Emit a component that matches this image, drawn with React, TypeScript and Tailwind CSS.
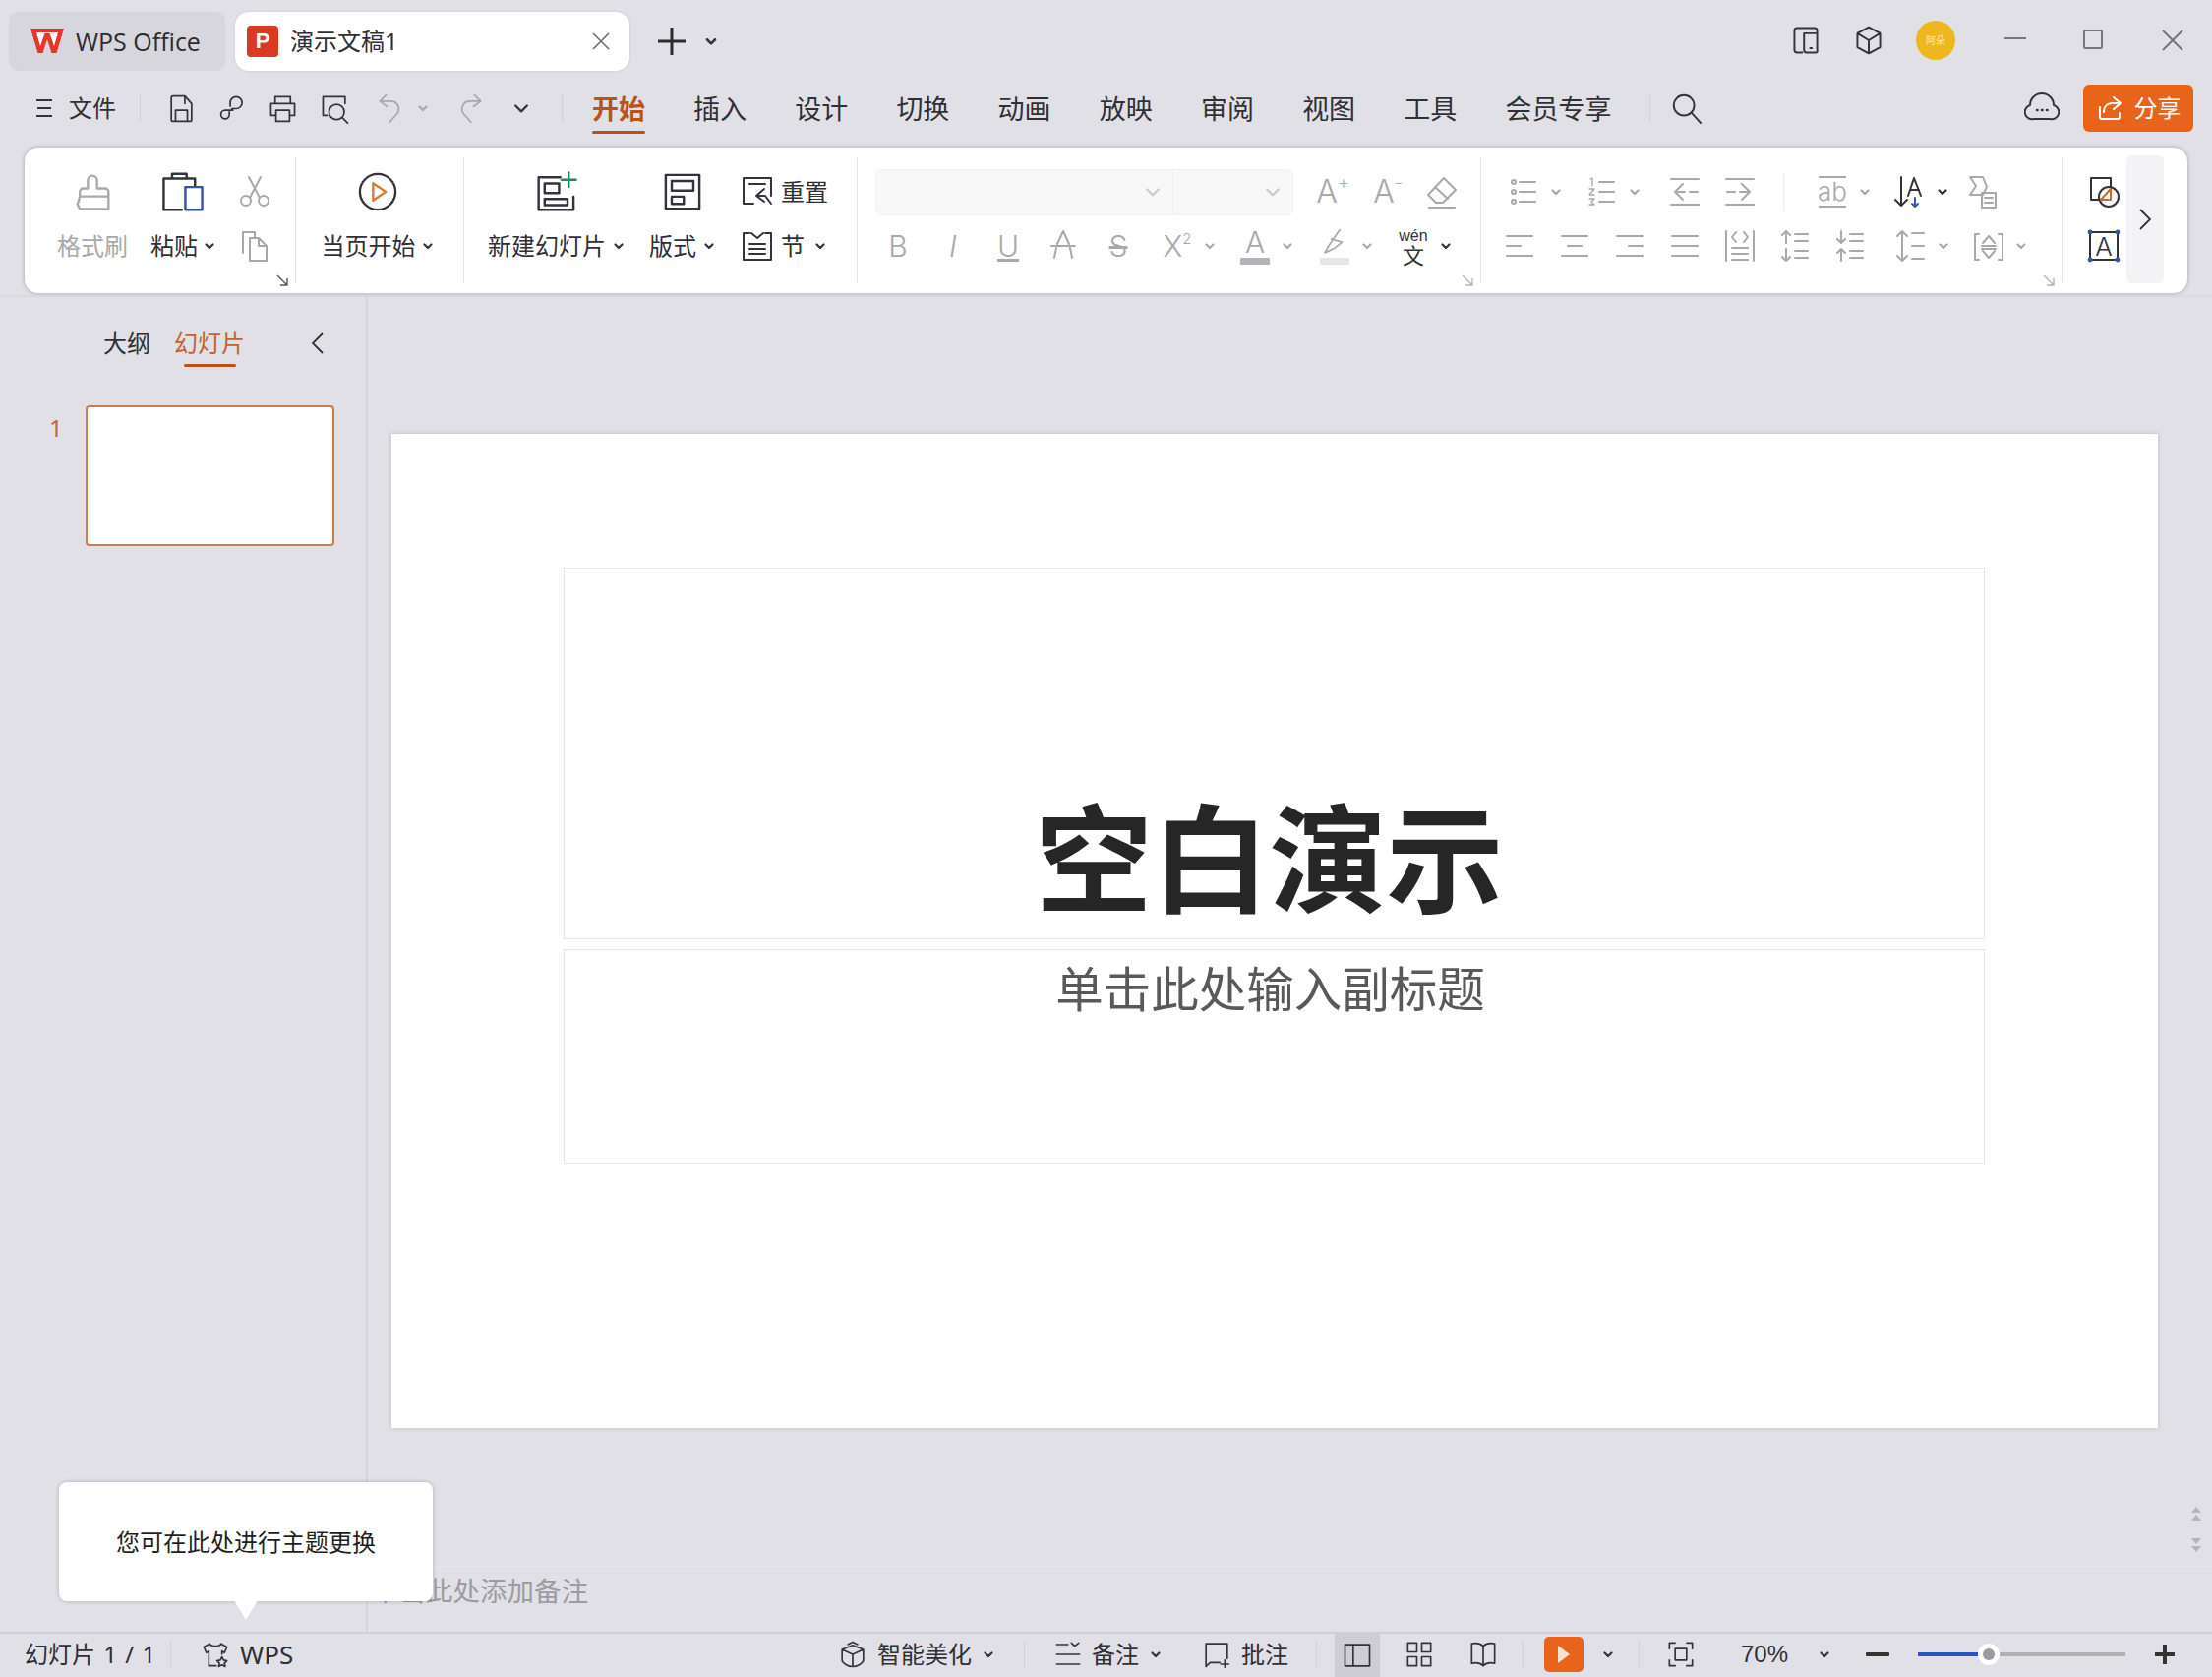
import type { ReactNode } from "react";

const dark = "#33333b";
const off = "#a9a9ad";
const cjk = "font-['Noto_Sans','Noto_Sans_CJK_SC',sans-serif]";
const thin = "font-['Inter',sans-serif] font-light";

const Ico = ({ s = 36, c = dark, sw = 2, children }: { s?: number; c?: string; sw?: number; children: ReactNode }) => (
  <svg width={s} height={s} viewBox="0 0 36 36" fill="none" stroke={c} strokeWidth={sw} strokeLinecap="round" strokeLinejoin="round" className="shrink-0">
    {children}
  </svg>
);

const Chev = ({ c = dark, w = 12, sw = 2.2 }: { c?: string; w?: number; sw?: number }) => (
  <svg width={w} height={w} viewBox="0 0 12 12" fill="none" stroke={c} strokeWidth={sw} strokeLinecap="round" strokeLinejoin="round" className="shrink-0">
    <path d="M2.5 4.5 6 8l3.5-3.5" />
  </svg>
);

const Sep = ({ className = "" }: { className?: string }) => <div className={`w-px h-[28px] bg-[#d0d0d6] shrink-0 ${className}`} />;

const Launcher = ({ className = "", c = "#555" }: { className?: string; c?: string }) => (
  <svg width="14" height="14" viewBox="0 0 14 14" fill="none" stroke={c} strokeWidth="1.4" className={`absolute ${className}`}>
    <path d="M2 2l9 9M12 5v7H5" />
  </svg>
);

// icon + little arrow, the usual split button of the ribbon
const Drop = ({ children, c = off, className = "" }: { children: ReactNode; c?: string; className?: string }) => (
  <div className={`flex items-center gap-[9px] shrink-0 ${className}`}>
    {children}
    <Chev c={c} />
  </div>
);

const Cell = ({ children }: { children: ReactNode }) => <div className="w-[56px] flex justify-center items-center shrink-0">{children}</div>;

const Glyph = ({ children, className = "" }: { children: ReactNode; className?: string }) => (
  <div className={`w-[36px] h-[36px] flex items-center justify-center leading-none shrink-0 text-[#a9a9ad] ${thin} ${className}`}>{children}</div>
);

const Row = ({ children, className = "" }: { children: ReactNode; className?: string }) => <div className={`h-[44px] flex items-center ${className}`}>{children}</div>;

const Col = ({ className = "", top, bottom }: { className?: string; top: ReactNode; bottom: ReactNode }) => (
  <div className={`flex flex-col items-center gap-[11px] shrink-0 ${className}`}>
    <Row className="justify-center">{top}</Row>
    <Row className="justify-center">{bottom}</Row>
  </div>
);

const RibbonLine = () => <div className="w-px my-[10px] bg-[#e4e4e8] shrink-0" />;

const lines = (ys: number[], x1: number, x2: number) => ys.map((y) => <path key={y} d={`M${x1} ${y}H${x2}`} />);

const menuTabs = ["插入", "设计", "切换", "动画", "放映", "审阅", "视图", "工具", "会员专享"];

export default function App() {
  return (
    <div className={`w-[2249px] h-[1705px] overflow-hidden relative flex flex-col bg-[#e0e0e6] text-[#2f2f35] ${cjk}`}>
      {/* title bar */}
      <div className="h-[84px] flex items-center shrink-0">
        <div className="ml-[9px] w-[220px] h-[60px] rounded-[10px] bg-[#d6d6dc] flex items-center shrink-0">
          <svg width="36" height="32" viewBox="0 0 36 32" className="ml-[21px] shrink-0">
            <path d="M1 3h34l-7.5 25h-5L18 14l-4.5 14h-5z" fill="#e8352b" />
            <path d="M7 7h22l-4 14-4.5-13h-5L11 21z" fill="#fff" />
            <path d="M16 8h4l-2 6z" fill="#e8352b" />
          </svg>
          <span className="ml-[11px] text-[25px] leading-none font-['Open_Sans',sans-serif] text-[#2c2c30] whitespace-nowrap">WPS Office</span>
        </div>
        <div className="ml-[10px] w-[401px] h-[60px] rounded-[14px] bg-white flex items-center shadow-[0_0_3px_rgba(0,0,0,0.12)] shrink-0">
          <div className="ml-[12px] w-[32px] h-[32px] rounded-[4px] bg-[#d93a22] text-white text-[22px] font-bold flex items-center justify-center leading-none font-['Liberation_Sans',sans-serif]">P</div>
          <span className="ml-[12px] text-[24px] leading-none whitespace-nowrap">演示文稿1</span>
          <svg width="20" height="20" viewBox="0 0 20 20" stroke="#70707a" strokeWidth="1.7" className="ml-auto mr-[19px]">
            <path d="M2 2l16 16M18 2 2 18" />
          </svg>
        </div>
        <svg width="32" height="32" viewBox="0 0 32 32" stroke="#2b2b2f" strokeWidth="3" className="ml-[27px] shrink-0">
          <path d="M16 2v28M2 16h28" />
        </svg>
        <div className="ml-[17px]"><Chev w={14} /></div>
        <div className="ml-[1090px] -mt-[3px]">
          <Ico s={32} sw={2.2}>
            <path d="M14 4H8a3 3 0 0 0-3 3v22a3 3 0 0 0 3 3h6M13 4h15a3 3 0 0 1 3 3v22a2 2 0 0 1-2 3H19a3 3 0 0 1-3-3V10h15" />
            <path d="M23 27h2" />
          </Ico>
        </div>
        <div className="ml-[32px] -mt-[3px]">
          <Ico s={32} sw={2.2}>
            <path d="M18 3 5 10v16l13 7 13-7V10zM5 10l13 8 13-8M18 18v15" />
          </Ico>
        </div>
        <div className="ml-[32px] -mt-[3px] w-[40px] h-[40px] rounded-full bg-[#efb71e] flex items-center justify-center text-[10px] text-[#fbe9b0] leading-none whitespace-nowrap shrink-0">阿朵</div>
        <div className="ml-[50px] -mt-[6px] w-[22px] h-[2px] bg-[#77777f] shrink-0" />
        <div className="ml-[58px] -mt-[4px] w-[20px] h-[20px] border-2 border-[#77777f] rounded-[2px] shrink-0" />
        <svg width="22" height="22" viewBox="0 0 22 22" stroke="#70707a" strokeWidth="1.8" className="ml-[60px] -mt-[3px] shrink-0">
          <path d="M1 1l20 20M21 1 1 21" />
        </svg>
      </div>

      {/* menu row */}
      <div className="h-[52px] flex items-center shrink-0">
        <div className="ml-[33px] w-[24px] flex flex-col gap-[6px] items-center shrink-0">
          <div className="w-[16px] h-[2px] bg-[#333]" />
          <div className="w-[14px] h-[2px] bg-[#333]" />
          <div className="w-[16px] h-[2px] bg-[#333]" />
        </div>
        <span className="ml-[13px] w-[48px] text-[24px] leading-none whitespace-nowrap shrink-0">文件</span>
        <Sep className="ml-[24px]" />
        <div className="ml-[26px]">
          <Ico s={31}>
            <path d="M8 3h14l8 9v19a2 2 0 0 1-2 2H8a2 2 0 0 1-2-2V5a2 2 0 0 1 2-2zM11 33V20h14v13M22 3v9" />
          </Ico>
        </div>
        <div className="ml-[22px]">
          <Ico s={31}>
            <path d="M14 15v-4a7 7 0 1 1 7 7h-5M13 22v3a5 5 0 1 1-5-5h9" />
          </Ico>
        </div>
        <div className="ml-[19px]">
          <Ico s={31}>
            <path d="M9 12V4h18v8M9 26H4V12h28v14h-5M10 20h16v13H10z" />
          </Ico>
        </div>
        <div className="ml-[22px]">
          <Ico s={31}>
            <path d="M4 26V4h26v8M4 26h5" />
            <circle cx="20" cy="22" r="9" />
            <path d="M27 29l6 6" />
          </Ico>
        </div>
        <div className="ml-[25px]">
          <Ico s={32} c={off}>
            <path d="M13 3 6 10l8 6M6 10h13a9 9 0 0 1 6 15l-8 9" />
          </Ico>
        </div>
        <div className="ml-[11px]"><Chev c={off} /></div>
        <div className="ml-[26px]">
          <Ico s={32} c={off}>
            <path d="M23 3l7 7-8 6M30 10H17a9 9 0 0 0-6 15l8 9" />
          </Ico>
        </div>
        <div className="ml-[26px]"><Chev w={20} sw={1.4} /></div>
        <Sep className="ml-[31px]" />
        <div className="ml-[30px] relative w-[54px] text-[27px] leading-none font-bold text-[#b9531c] whitespace-nowrap shrink-0">
          开始
          <div className="absolute left-0 right-0 -bottom-[12px] h-[3px] bg-[#b9531c] rounded-full" />
        </div>
        <div className="ml-[49px] flex gap-[49.2px] text-[27px] leading-none whitespace-nowrap shrink-0">
          {menuTabs.map((t) => (
            <span key={t}>{t}</span>
          ))}
        </div>
        <Sep className="ml-[38px]" />
        <div className="ml-[20px]">
          <Ico s={34}>
            <circle cx="15" cy="15" r="11" />
            <path d="M23 23l10 11" />
          </Ico>
        </div>
        <div className="ml-[326px]">
          <Ico>
            <path d="M10 29a7 7 0 0 1-4-14 12 12 0 0 1 24 0 7 7 0 0 1-4 14z" />
            <path d="M13 20h.5M18 20h.5M23 20h.5" strokeWidth="2.6" />
          </Ico>
        </div>
        <div className="ml-[24px] w-[112px] h-[48px] rounded-[6px] bg-[#e8641b] text-white flex items-center shrink-0">
          <svg width="28" height="28" viewBox="0 0 28 28" fill="none" stroke="#fff" strokeWidth="2" strokeLinecap="round" strokeLinejoin="round" className="ml-[14px]">
            <path d="M17 3l7 6-7 6M24 9h-8c-6 0-9 4-9 9M3 13v10a2 2 0 0 0 2 2h16a2 2 0 0 0 2-2v-4" />
          </svg>
          <span className="ml-[10px] text-[24px] leading-none whitespace-nowrap">分享</span>
        </div>
      </div>

      {/* ribbon */}
      <div className="mt-[14px] ml-[25px] w-[2199px] h-[148px] shrink-0 bg-white rounded-[14px] flex shadow-[0_0_4px_rgba(0,0,0,0.28)] z-10 text-[24px] leading-none whitespace-nowrap">
        {/* clipboard */}
        <div className="w-[275px] flex pt-[23px] relative shrink-0">
          <Col
            className="ml-[33px] w-[72px] text-[#a9a9ad]"
            top={
              <Ico s={42} c={off}>
                <path d="M14 8a4 4 0 1 1 8 0v7h7a3 3 0 0 1 3 3v15H7l-2-4 2-7v-4a3 3 0 0 1 3-3h4zM7 22h25" />
              </Ico>
            }
            bottom="格式刷"
          />
          <Col
            className="ml-[22px] w-[68px]"
            top={
              <Ico s={44}>
                <path d="M2 33V7h7M9 7V3h12v4H9zM21 7h7v6M2 33h15" />
                <path d="M20 14h14v19H20z" stroke="#3a53a4" />
              </Ico>
            }
            bottom={
              <div className="flex items-center gap-[6px]">
                粘贴
                <Chev />
              </div>
            }
          />
          <Col
            className="ml-[21px] w-[36px]"
            top={
              <Ico c={off}>
                <path d="M12 3l11 21M24 3 13 24" />
                <circle cx="9" cy="27" r="5" />
                <circle cx="27" cy="27" r="5" />
              </Ico>
            }
            bottom={
              <Ico c={off}>
                <path d="M6 25V4h12l0 6M13 10h9l8 8v15H13zM22 10v8h8" />
              </Ico>
            }
          />
          <Launcher className="left-[255px] top-[128px]" />
        </div>
        <RibbonLine />
        {/* slideshow */}
        <div className="w-[170px] flex pt-[23px] shrink-0">
          <Col
            className="ml-[26px] w-[113px]"
            top={
              <Ico s={42}>
                <circle cx="18" cy="18" r="15.5" />
                <path d="M14 10.5 25 18l-11 7.5z" stroke="#d67a3c" strokeWidth="2" />
              </Ico>
            }
            bottom={
              <div className="flex items-center gap-[6px]">
                当页开始
                <Chev />
              </div>
            }
          />
        </div>
        <RibbonLine />
        {/* slides */}
        <div className="w-[399px] flex pt-[23px] shrink-0">
          <Col
            className="ml-[24px] w-[139px]"
            top={
              <Ico s={44}>
                <path d="M21 6H3v27h29V22M8 11h12v8H8zM8 24h19v5H8z" />
                <path d="M28 2v12M22 8h12" stroke="#1f8a5f" />
              </Ico>
            }
            bottom={
              <div className="flex items-center gap-[7px]">
                新建幻灯片
                <Chev />
              </div>
            }
          />
          <Col
            className="ml-[25px] w-[67px]"
            top={
              <Ico s={44}>
                <path d="M4 4h28v28H4zM9 9h18v8H9zM9 22h10v6H9z" />
              </Ico>
            }
            bottom={
              <div className="flex items-center gap-[7px]">
                版式
                <Chev />
              </div>
            }
          />
          <div className="ml-[25px] flex flex-col gap-[11px] shrink-0">
            <Row>
              <Ico>
                <path d="M14 30H4V4h28v18M10 10h16" />
                <path d="M25 15l-8 7 8 6M17 22h9l6 8" />
              </Ico>
              <span className="ml-[6px]">重置</span>
            </Row>
            <Row>
              <Ico>
                <path d="M10 5H4v27h28V5h-6M12 5l6 5 6-5M10 16h16M10 21h16M10 26h16" />
              </Ico>
              <span className="ml-[6px]">节</span>
              <div className="ml-[10px]"><Chev /></div>
            </Row>
          </div>
        </div>
        <RibbonLine />
        {/* text formatting */}
        <div className="w-[633px] flex flex-col gap-[11px] pt-[23px] relative shrink-0">
          <Row>
            <div className="ml-[18px] w-[425px] h-[47px] rounded-[6px] bg-[#f8f8f8] border border-[#f2f2f2] flex shrink-0">
              <div className="w-[302px] flex items-center justify-end pr-[10px] border-r border-[#eeeeee]"><Chev w={20} c="#c9c9c9" sw={1.3} /></div>
              <div className="flex-1 flex items-center justify-end pr-[10px]"><Chev w={20} c="#c9c9c9" sw={1.3} /></div>
            </div>
            <Glyph className="ml-[22px] text-[32px]">
              A<sup className="text-[18px]">+</sup>
            </Glyph>
            <Glyph className="ml-[20px] text-[32px]">
              A<sup className="text-[18px]">-</sup>
            </Glyph>
            <div className="ml-[18px]">
              <Ico c={off}>
                <path d="M21 4l12 12-13 13H13L5 21zM12 13l13 12M6 34h26" />
              </Ico>
            </div>
          </Row>
          <Row className="pl-[13px]">
            <Cell><Glyph className="text-[30px]">B</Glyph></Cell>
            <Cell><Glyph className="text-[30px] italic">I</Glyph></Cell>
            <Cell><Glyph className="text-[30px] underline">U</Glyph></Cell>
            <Cell>
              <Ico c={off}>
                <path d="M12 16l6-13 6 13M6 18h24M11 20l-2 10M25 20l2 10" />
              </Ico>
            </Cell>
            <Cell><Glyph className="text-[30px] line-through">S</Glyph></Cell>
            <Drop className="ml-[14px]">
              <Glyph className="text-[30px]">X<sup className="text-[15px]">2</sup></Glyph>
            </Drop>
            <Drop className="ml-[22px]">
              <div className="w-[36px] flex flex-col items-center gap-[1px]">
                <span className={`text-[30px] leading-none text-[#a9a9ad] ${thin}`}>A</span>
                <div className="w-[30px] h-[7px] bg-[#b4b4b8] rounded-[1px]" />
              </div>
            </Drop>
            <Drop className="ml-[24px]">
              <div className="w-[36px] flex flex-col items-center">
                <Ico s={30} c={off}>
                  <path d="M24 2 11 21l-5 9 11-5 10-8-13-4" />
                </Ico>
                <div className="w-[30px] h-[7px] bg-[#e6e6e8] rounded-[1px]" />
              </div>
            </Drop>
            <Drop className="ml-[23px]" c={dark}>
              <div className="w-[36px] flex flex-col items-center text-[#333]">
                <div className="h-[17px] text-[16px] leading-[17px] font-['Liberation_Sans',sans-serif]">wén</div>
                <div className="h-[22px] text-[22px] leading-[22px]">文</div>
              </div>
            </Drop>
          </Row>
          <Launcher className="left-[613px] top-[128px]" c="#b5b5b5" />
        </div>
        <RibbonLine />
        {/* paragraph */}
        <div className="w-[590px] flex flex-col gap-[11px] pt-[23px] relative shrink-0">
          <Row>
            <Drop className="ml-[25px]">
              <Ico c={off}>
                <circle cx="8" cy="8" r="2" />
                <circle cx="8" cy="18" r="2" />
                <circle cx="8" cy="28" r="2" />
                {lines([8, 18, 28], 14, 30)}
              </Ico>
            </Drop>
            <Drop className="ml-[23px]">
              <Ico c={off}>
                {lines([8, 18, 28], 15, 30)}
                <path d="M6 5l2-1v8M5 15h5l-5 6h5M5 25h5l-3 3 3 3H5" strokeWidth="1.3" />
              </Ico>
            </Drop>
            <div className="ml-[27px]">
              <Ico c={off}>
                {lines([5, 31], 4, 32)}
                <path d="M16 10l-8 8 8 8M8 18h10M23 18h8" />
              </Ico>
            </div>
            <div className="ml-[20px]">
              <Ico c={off}>
                {lines([5, 31], 4, 32)}
                <path d="M20 10l8 8-8 8M28 18H18M5 18h8" />
              </Ico>
            </div>
            <div className="ml-[26px] w-px h-[40px] bg-[#ececee] shrink-0" />
            <Drop className="ml-[31px]">
              <div className={`w-[36px] flex flex-col items-center text-[#a9a9ad] text-[26px] leading-[28px] ${thin}`}>
                <div className="w-[28px] h-[2px] bg-[#a9a9ad]" />
                ab
                <div className="w-[28px] h-[2px] bg-[#a9a9ad]" />
              </div>
            </Drop>
            <Drop className="ml-[22px]" c={dark}>
              <div className="w-[36px] h-[36px] flex items-center relative">
                <Ico>
                  <path d="M9 3v29M3 26l6 6 6-6M16 22l6-18 7 18M18 16h9" />
                  <path d="M23 24v9M20 30l3 3 3-3" stroke="#3a53a4" />
                </Ico>
              </div>
            </Drop>
            <div className="ml-[16px]">
              <Ico c={off}>
                <path d="M6 3h13l4 10-4 8H6l6-9zM18 19h14v15H18zM21 24h8M21 29h8" />
              </Ico>
            </div>
          </Row>
          <Row className="pl-[11px]">
            <Cell><Ico c={off}><path d="M5 8h26M5 18h14M5 28h26" /></Ico></Cell>
            <Cell><Ico c={off}><path d="M5 8h26M11 18h14M5 28h26" /></Ico></Cell>
            <Cell><Ico c={off}><path d="M5 8h26M17 18h14M5 28h26" /></Ico></Cell>
            <Cell><Ico c={off}>{lines([8, 18, 28], 5, 31)}</Ico></Cell>
            <Cell>
              <Ico c={off}>
                <path d="M4 3v30M32 3v30M10 20h16M10 26h16M10 32h16M14 4l-4 5 4 5M22 4l4 5-4 5" />
              </Ico>
            </Cell>
            <Cell>
              <Ico c={off}>
                <path d="M9 3v12M5 7l4-4 4 4M9 21v12M5 29l4 4 4-4M18 6h13M18 13h13M18 23h13M18 30h13" />
              </Ico>
            </Cell>
            <Cell>
              <Ico c={off}>
                <path d="M9 3v12M5 11l4 4 4-4M9 21v12M5 25l4-4 4 4M18 6h13M18 13h13M18 23h13M18 30h13" />
              </Ico>
            </Cell>
            <Drop className="ml-[16px]">
              <Ico c={off}>
                <path d="M9 3v30M4 8l5-5 5 5M4 28l5 5 5-5M19 5h12M19 18h12M19 31h12" />
              </Ico>
            </Drop>
            <Drop className="ml-[22px]">
              <Ico c={off}>
                <path d="M8 6H4v26h4M28 6h4v26h-4M12 15l6-7 6 7M12 23l6 7 6-7M11 18h14M11 21h14" />
              </Ico>
            </Drop>
          </Row>
          <Launcher className="left-[570px] top-[128px]" c="#b5b5b5" />
        </div>
        <RibbonLine />
        {/* shapes */}
        <div className="flex flex-col gap-[11px] pt-[23px] ml-[24px] shrink-0">
          <Row>
            <Ico>
              <path d="M25 16V4H5v22h9" />
              <circle cx="23" cy="23" r="10" />
              <path d="M15 26l10-11v11z" stroke="#d2662a" />
            </Ico>
          </Row>
          <Row>
            <svg width="36" height="36" viewBox="0 0 36 36" fill="none" className="shrink-0">
              <path d="M6 4h24M6 32h24M4 6v24M32 6v24" stroke="#333" strokeWidth="2" />
              <text x="18" y="28" textAnchor="middle" fontSize="26" fill="#333" stroke="none" fontFamily="Inter" fontWeight="300">A</text>
              {[[4, 4], [32, 4], [4, 32], [32, 32]].map(([x, y]) => (
                <circle key={`${x}-${y}`} cx={x} cy={y} r="2.4" fill="#3a53a4" />
              ))}
            </svg>
          </Row>
        </div>
        <div className="ml-[5px] mt-[8px] w-[38px] h-[130px] rounded-[6px] bg-[#f3f3f5] flex items-center justify-center shrink-0">
          <svg width="14" height="24" viewBox="0 0 14 24" fill="none" stroke="#333" strokeWidth="1.8">
            <path d="M2 2l10 10L2 22" />
          </svg>
        </div>
      </div>

      {/* work area */}
      <div className="flex-1 flex min-h-0 mt-[2px] border-t-2 border-[#dadae0]">
        <div className="w-[374px] shrink-0 border-r-2 border-[#d4d4da]">
          <div className="pt-[35px] pl-[105px] flex items-start text-[24px] leading-none whitespace-nowrap">
            <span>大纲</span>
            <div className="ml-[24px] w-[72px] flex flex-col items-center text-[#c1642d]">
              幻灯片
              <div className="mt-[9px] w-[53px] h-[3px] rounded-full bg-[#b9531c]" />
            </div>
            <svg width="14" height="24" viewBox="0 0 14 24" fill="none" stroke="#333" strokeWidth="1.8" className="ml-[67px]">
              <path d="M12 2 2 12l10 10" />
            </svg>
          </div>
          <div className="mt-[39px] flex items-start">
            <span className="ml-[50px] mt-[11px] w-[37px] text-[24px] leading-none text-[#c2663a]">1</span>
            <div className="w-[253px] h-[143px] bg-white border-2 border-[#c97d52] rounded-[4px]" />
          </div>
        </div>
        <div className="flex-1 flex flex-col min-w-0">
          <div className="h-[1290px] flex items-start shrink-0">
            <div className="mt-[139px] ml-[24px] w-[1796px] h-[1011px] bg-white shadow-[0_0_5px_rgba(0,0,0,0.16)] shrink-0 pt-[136px] pl-[175px]">
              <div className="w-[1445px] h-[378px] border border-dotted border-[#d2d2d2] flex items-end justify-center pb-[13px] pr-[10px]">
                <span className="text-[119px] leading-[135px] font-bold text-[#262626] whitespace-nowrap">空白演示</span>
              </div>
              <div className="mt-[10px] w-[1445px] h-[218px] border border-dotted border-[#d2d2d2] flex justify-center pt-[11px] pr-[8px]">
                <span className="text-[48.5px] leading-[56px] text-[#595959] whitespace-nowrap">单击此处输入副标题</span>
              </div>
            </div>
            <div className="self-end mb-[14px] ml-[32px] flex flex-col gap-[14px] shrink-0">
              <svg width="14" height="16" viewBox="0 0 14 16" fill="#b4b4ba"><path d="M7 0l5 6H2zM7 8l5 6H2z" /></svg>
              <svg width="14" height="16" viewBox="0 0 14 16" fill="#b4b4ba"><path d="M2 2h10L7 8zM2 10h10l-5 6z" /></svg>
            </div>
          </div>
          <div className="flex-1 border-t border-[#e6e6ea] pl-[4px] pt-[11px] text-[27.5px] leading-none text-[#9b9ba1] whitespace-nowrap">单击此处添加备注</div>
        </div>
      </div>

      {/* status bar */}
      <div className="h-[46px] shrink-0 flex items-center pb-[2px] border-t-2 border-[#cfcfd5] text-[24px] leading-none whitespace-nowrap">
        <span className="ml-[25px] w-[130px] shrink-0 [word-spacing:2px]">幻灯片 1 / 1</span>
        <Sep className="ml-[18px]" />
        <div className="ml-[30px]">
          <Ico s={30}>
            <path d="M11 5 4 9l3 7 3-2v18h9M25 5l7 4-3 7-3-2v4M11 5c2 4 12 4 14 0" />
            <path d="M26 21l2 4 4 1-3 3 1 4-4-2-4 2 1-4-3-3 4-1z" />
          </Ico>
        </div>
        <span className="ml-[10px] w-[51px] text-[26px] shrink-0">WPS</span>
        <div className="ml-[557px]">
          <Ico s={30}>
            <path d="M12 6l6-3 6 3M5 12l13-5 13 5v13c0 4-8 8-13 8S5 29 5 25zM5 12l13 6 13-6M18 18v15" />
          </Ico>
        </div>
        <span className="ml-[10px] w-[96px] shrink-0">智能美化</span>
        <div className="ml-[11px]"><Chev /></div>
        <Sep className="ml-[30px]" />
        <div className="ml-[29px]">
          <Ico s={30}>
            <path d="M4 6h14M4 18h28M4 30h28M22 4l4 4 5-4" />
          </Ico>
        </div>
        <span className="ml-[9px] w-[48px] shrink-0">备注</span>
        <div className="ml-[11px]"><Chev /></div>
        <div className="ml-[41px]">
          <Ico s={30}>
            <path d="M22 28H10l-5 5V5h26v18M28 25v9M23 30h10" />
          </Ico>
        </div>
        <span className="ml-[10px] w-[48px] shrink-0">批注</span>
        <Sep className="ml-[28px]" />
        <div className="ml-[18px] w-[46px] -mb-[2px] self-stretch bg-[#cdcdd3] flex items-center justify-center shrink-0">
          <Ico s={30}>
            <path d="M3 5h30v26H3zM13 5v26" />
          </Ico>
        </div>
        <div className="ml-[25px]">
          <Ico s={30}>
            <path d="M4 4h11v11H4zM21 4h11v11H21zM4 21h11v11H4zM21 21h11v11H21z" />
          </Ico>
        </div>
        <div className="ml-[35px]">
          <Ico s={30}>
            <path d="M18 8C14 4 8 4 4 5v24c4-1 10-1 14 3 4-4 10-4 14-3V5c-4-1-10-1-14 3zM18 8v24" />
          </Ico>
        </div>
        <Sep className="ml-[25px]" />
        <div className="ml-[21px] w-[40px] h-[36px] rounded-[5px] bg-[#e8641b] flex items-center justify-center shrink-0">
          <svg width="14" height="18" viewBox="0 0 14 18" fill="#f7e3d2"><path d="M1 0l12 9-12 9z" /></svg>
        </div>
        <div className="ml-[19px]"><Chev /></div>
        <Sep className="ml-[25px]" />
        <div className="ml-[27px]">
          <Ico s={30}>
            <path d="M4 11V4h7M25 4h7v7M32 25v7h-7M11 32H4v-7M11 11h14v14H11z" />
          </Ico>
        </div>
        <span className="ml-[46px] w-[49px] font-['Liberation_Sans',sans-serif] shrink-0">70%</span>
        <div className="ml-[30px]"><Chev /></div>
        <div className="ml-[36px] w-[24px] h-[4px] bg-[#333] rounded-[1px] shrink-0" />
        <div className="ml-[29px] w-[211px] flex items-center shrink-0">
          <div className="w-[61px] h-[4px] bg-[#2d52c4]" />
          <div className="w-[22px] h-[22px] rounded-full bg-white flex items-center justify-center shrink-0">
            <div className="w-[12px] h-[12px] rounded-full bg-[#9a9a9f]" />
          </div>
          <div className="flex-1 h-[4px] bg-[#b0b0b5]" />
        </div>
        <svg width="24" height="24" viewBox="0 0 24 24" stroke="#333" strokeWidth="4" className="ml-[28px] shrink-0">
          <path d="M12 2v20M2 12h20" />
        </svg>
      </div>

      {/* theme hint */}
      <div className="absolute left-[60px] top-[1507px] w-[380px] h-[121px] bg-white rounded-[8px] shadow-[0_0_4px_rgba(0,0,0,0.22)] flex items-center justify-center text-[24px] leading-none text-[#1f1f1f] whitespace-nowrap z-20">
        您可在此处进行主题更换
        <div className="absolute left-[178px] top-[120px] w-0 h-0 border-l-[12px] border-r-[12px] border-t-[20px] border-l-transparent border-r-transparent border-t-white" />
      </div>
    </div>
  );
}
